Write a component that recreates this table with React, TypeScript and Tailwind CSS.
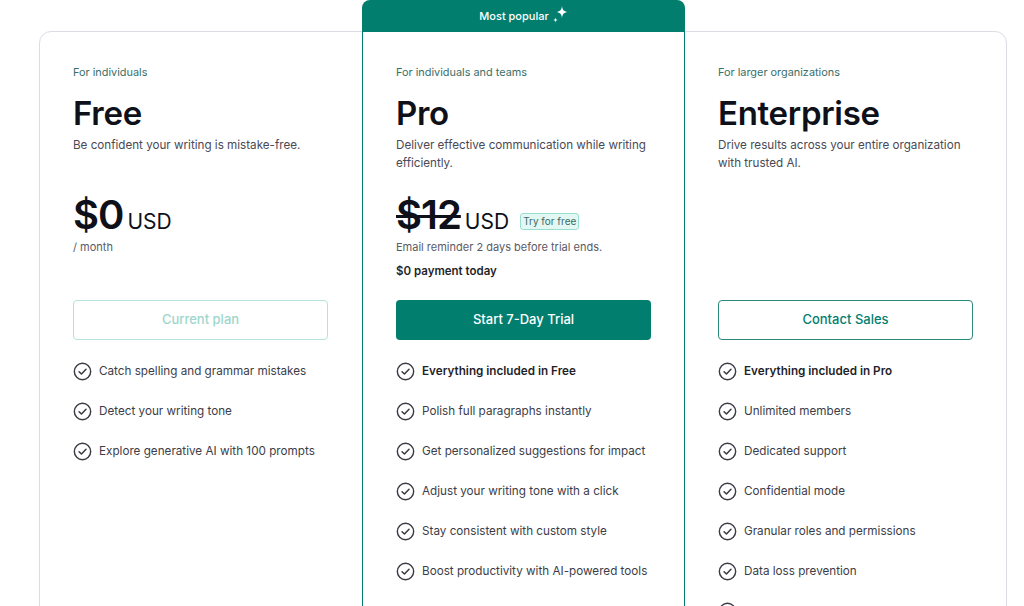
import React from "react";

const CheckIcon = () => (
    <svg width="19" height="19" viewBox="0 0 20 20" fill="none" className="shrink-0">
        <circle cx="10" cy="10" r="8.6" stroke="#3a3a44" strokeWidth="1.5" />
        <path d="M6.4 10.2l2.5 2.5 4.8-5" stroke="#3a3a44" strokeWidth="1.6" strokeLinecap="round" strokeLinejoin="round" />
    </svg>
);

const Sparkle = () => (
    <svg width="16" height="19" viewBox="0 0 16 19" fill="white" className="ml-[3px] -mt-[3px]">
        <path d="M10 1 C10.6 5.2 11.6 6.2 15.5 7 C11.6 7.8 10.6 8.8 10 13 C9.4 8.8 8.4 7.8 4.5 7 C8.4 6.2 9.4 5.2 10 1Z" />
        <path d="M3.5 12.5 C3.7 14.1 4.2 14.6 5.8 15 C4.2 15.4 3.7 15.9 3.5 17.5 C3.3 15.9 2.8 15.4 1.2 15 C2.8 14.6 3.3 14.1 3.5 12.5Z" />
    </svg>
);

interface Feature {
    text: string;
    bold?: boolean;
}

const FeatureList = ({ items }: { items: Feature[] }) => (
    <ul className="flex flex-col gap-[21px] mt-[22px]">
        {items.map((f) => (
            <li key={f.text} className="flex items-center gap-[7px] h-[19px]">
                <CheckIcon />
                <span className={f.bold ? "text-[11.7px] font-semibold text-[#1f1f29]" : "text-[11.7px] text-[#3d3d48]"}>{f.text}</span>
            </li>
        ))}
    </ul>
);

const freeFeatures: Feature[] = [
    { text: "Catch spelling and grammar mistakes" },
    { text: "Detect your writing tone" },
    { text: "Explore generative AI with 100 prompts" },
];

const proFeatures: Feature[] = [
    { text: "Everything included in Free", bold: true },
    { text: "Polish full paragraphs instantly" },
    { text: "Get personalized suggestions for impact" },
    { text: "Adjust your writing tone with a click" },
    { text: "Stay consistent with custom style" },
    { text: "Boost productivity with AI-powered tools" },
];

const entFeatures: Feature[] = [
    { text: "Everything included in Pro", bold: true },
    { text: "Unlimited members" },
    { text: "Dedicated support" },
    { text: "Confidential mode" },
    { text: "Granular roles and permissions" },
    { text: "Data loss prevention" },
];

const Heading = ({ eyebrow, title, desc }: { eyebrow: string; title: string; desc: string }) => (
    <div className="h-[131px]">
        <p className="text-[10.9px] text-[#3a6f6a] leading-4">{eyebrow}</p>
        <h2 className="mt-[13px] text-[33px] font-semibold text-[#0e101a] leading-[40px] tracking-[-0.3px]">{title}</h2>
        <p className="mt-[3px] text-[11.65px] text-[#4a4a56] leading-[18px] pr-1">{desc}</p>
    </div>
);

const Price = ({ amount, strike }: { amount: string; strike?: boolean }) => (
    <>
        <span
            className={
                strike
                    ? "text-[40px] font-semibold text-[#0e101a] leading-[40px] tracking-[-1px] line-through decoration-[3px]"
                    : "text-[40px] font-semibold text-[#0e101a] leading-[40px] tracking-[-1px]"
            }
        >
            {amount}
        </span>
        <span className="ml-1 text-[21px] text-[#0e101a]">USD</span>
    </>
);

export default function App() {
    return (
        <div className="w-[1024px] h-[606px] overflow-hidden bg-white" style={{ fontFamily: "Inter, 'Noto Sans', sans-serif" }}>
            <div className="ml-[39px] mt-[31px] w-[968px] h-[640px] border border-[#dcdbe6] rounded-xl flex">
                {/* Free */}
                <div className="w-[322px] px-[33px] pt-[32px]">
                    <Heading eyebrow="For individuals" title="Free" desc="Be confident your writing is mistake-free." />
                    <div className="h-[105px]">
                        <div className="flex items-baseline">
                            <Price amount="$0" />
                        </div>
                        <p className="mt-[1px] text-[11px] text-[#5a5a66]">/ month</p>
                    </div>
                    <button className="w-[255px] h-[40px] rounded border border-[#b5e2da] text-[13px] text-[#9ed6cc] font-medium">
                        Current plan
                    </button>
                    <FeatureList items={freeFeatures} />
                </div>

                {/* Pro */}
                <div className="w-[323px] -mt-[32px] flex flex-col">
                    <div className="h-[32px] bg-[#027e6f] rounded-t-lg flex items-center justify-center text-white text-[11px] font-medium">
                        Most popular
                        <Sparkle />
                    </div>
                    <div className="flex-1 border-x border-[#027e6f] px-[33px] pt-[32px]">
                        <Heading
                            eyebrow="For individuals and teams"
                            title="Pro"
                            desc="Deliver effective communication while writing efficiently."
                        />
                        <div className="h-[105px]">
                            <div className="flex items-baseline">
                                <Price amount="$12" strike />
                                <span className="ml-[11px] self-center mt-[11px] px-[2px] h-[17px] leading-[15px] rounded-[3px] border border-[#98dfd1] bg-[#e4f8f3] text-[10px] text-[#3a6b66]">
                                    Try for free
                                </span>
                            </div>
                            <p className="mt-[1px] text-[11px] text-[#5a5a66]">Email reminder 2 days before trial ends.</p>
                            <p className="mt-[8px] text-[11.5px] font-semibold text-[#1f1f29]">$0 payment today</p>
                        </div>
                        <button className="w-[255px] h-[40px] rounded bg-[#027e6f] text-[13px] text-white font-medium">
                            Start 7-Day Trial
                        </button>
                        <FeatureList items={proFeatures} />
                    </div>
                </div>

                {/* Enterprise */}
                <div className="w-[321px] px-[33px] pt-[32px]">
                    <Heading
                        eyebrow="For larger organizations"
                        title="Enterprise"
                        desc="Drive results across your entire organization with trusted AI."
                    />
                    <div className="h-[105px]" />
                    <button className="w-[255px] h-[40px] rounded border border-[#2b8a7e] text-[13px] text-[#027e6f] font-medium">
                        Contact Sales
                    </button>
                    <FeatureList items={entFeatures} />
                    <div className="mt-[21px]">
                        <CheckIcon />
                    </div>
                </div>
            </div>
        </div>
    );
}
